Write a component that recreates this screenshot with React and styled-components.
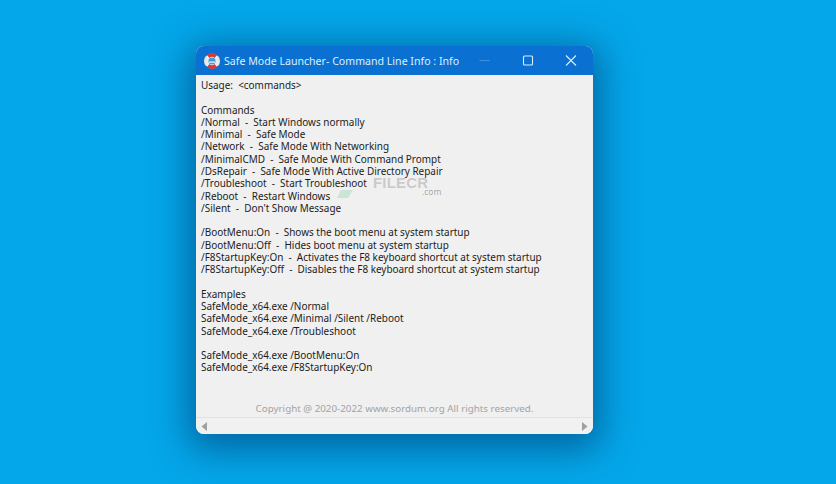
import React from "react";
import styled, { createGlobalStyle } from "styled-components";

const Global = createGlobalStyle`
  html, body { margin: 0; padding: 0; width: 836px; height: 484px; overflow: hidden; }
  body { background: #04a7ea; font-family: "Noto Sans", "Open Sans", sans-serif; }
`;

const Desktop = styled.div`
  width: 836px;
  height: 484px;
  box-sizing: border-box;
  padding: 46px 243px 50px 196px;
  background: #04a7ea;
`;

const Window = styled.div`
  height: 388px;
  display: flex;
  flex-direction: column;
  border-radius: 8px;
  overflow: hidden;
  background: #f0f0f0;
  box-shadow: 0 8px 36px 8px rgba(0, 40, 90, 0.5);
`;

const TitleBar = styled.div`
  height: 29px;
  flex: none;
  display: flex;
  align-items: center;
  background: #0a70d2;
  color: #dcf0fc;
  padding-left: 8px;
`;

const IconSvg = styled.svg`
  flex: none;
`;

const Title = styled.div`
  flex: 1;
  min-width: 0;
  margin-left: 4px;
  font-size: 10.6px;
  white-space: pre;
`;

const Controls = styled.div`
  flex: none;
  display: flex;
  align-items: center;
  padding-right: 1px;
`;

const ControlButton = styled.div`
  width: 43px;
  height: 29px;
  display: flex;
  align-items: center;
  justify-content: center;
`;

const Body = styled.div`
  position: relative;
  flex: 1;
  display: flex;
  flex-direction: column;
  min-height: 0;
`;

const TextArea = styled.pre`
  flex: 1;
  margin: 0;
  padding: 4px 0 0 5px;
  font-family: "Noto Sans", "Open Sans", sans-serif;
  font-size: 9.95px;
  line-height: 12.28px;
  color: #1c1c1c;
  white-space: pre;
`;

const Copyright = styled.div`
  text-align: center;
  font-size: 9.8px;
  line-height: 13px;
  color: #a3a3a3;
  padding-bottom: 2px;
`;

const ScrollBar = styled.div`
  height: 16px;
  flex: none;
  display: flex;
  align-items: center;
  justify-content: space-between;
  padding: 0 5px;
  border-top: 1px solid #e2e2e2;
  background: #f1f1f1;
`;

const Watermark = styled.div`
  position: absolute;
  left: 140px;
  top: 100px;
  width: 110px;
  height: 24px;
  pointer-events: none;
`;

const MarkWord = styled.div`
  position: absolute;
  left: 37px;
  top: 0;
  font-family: "Liberation Sans", sans-serif;
  font-weight: 700;
  font-size: 15px;
  line-height: 16px;
  letter-spacing: 0.2px;
  color: rgba(120, 120, 120, 0.32);
`;

const MarkDomain = styled.div`
  position: absolute;
  left: 86px;
  top: 12px;
  font-size: 8.5px;
  line-height: 10px;
  color: rgba(110, 120, 125, 0.6);
`;

const MarkLeaf = styled.svg`
  position: absolute;
  left: 1px;
  top: 14px;
`;

const Lifebuoy = () => (
  <IconSvg width="16" height="16" viewBox="0 0 16 16">
    <circle cx="8" cy="8" r="7.4" fill="#f4f4f4" />
    <path d="M3 1.9A7.6 7.6 0 0 1 13 1.9L10.6 4.9A3.8 3.800 0 0 0 5.400 4.900Z" fill="#d8383a" />
    <path d="M3 14.100A7.6 7.6 0 0 0 13 14.100L10.600 11.100A3.800 3.800 0 0 1 5.400 11.100Z" fill="#d8383a" />
    <path d="M1.900 3A7.6 7.6 0 0 0 1.900 13L4.700 10.600A3.800 3.800 0 0 1 4.700 5.400Z" fill="#e8e8e8" />
    <path d="M14.100 3A7.6 7.6 0 0 1 14.100 13L11.300 10.600A3.800 3.800 0 0 0 11.300 5.400Z" fill="#e8e8e8" />
    <circle cx="8" cy="8" r="3.600" fill="#3f9ad8" />
    <path d="M5 8.500h6v1.200H5z" fill="#e8f4fb" />
  </IconSvg>
);

const content = `Usage:  <commands>

Commands
/Normal  -  Start Windows normally
/Minimal  -  Safe Mode
/Network  -  Safe Mode With Networking
/MinimalCMD  -  Safe Mode With Command Prompt
/DsRepair  -  Safe Mode With Active Directory Repair
/Troubleshoot  -  Start Troubleshoot
/Reboot  -  Restart Windows
/Silent  -  Don't Show Message

/BootMenu:On  -  Shows the boot menu at system startup
/BootMenu:Off  -  Hides boot menu at system startup
/F8StartupKey:On  -  Activates the F8 keyboard shortcut at system startup
/F8StartupKey:Off  -  Disables the F8 keyboard shortcut at system startup

Examples
SafeMode_x64.exe /Normal
SafeMode_x64.exe /Minimal /Silent /Reboot
SafeMode_x64.exe /Troubleshoot

SafeMode_x64.exe /BootMenu:On
SafeMode_x64.exe /F8StartupKey:On`;

export default function App() {
  return (
    <>
      <Global />
      <Desktop>
        <Window>
          <TitleBar>
            <Lifebuoy />
            <Title>Safe Mode Launcher- Command Line Info : Info</Title>
            <Controls>
              <ControlButton>
                <svg width="12" height="12" viewBox="0 0 12 12">
                  <path d="M0.500 5.500h10.500" stroke="#3f8fdc" strokeWidth="1" />
                </svg>
              </ControlButton>
              <ControlButton>
                <svg width="12" height="12" viewBox="0 0 12 12">
                  <rect x="1.500" y="1" width="9" height="9" rx="1" fill="none" stroke="#d9eefc" strokeWidth="1.100" />
                </svg>
              </ControlButton>
              <ControlButton>
                <svg width="12" height="12" viewBox="0 0 12 12">
                  <path d="M1 0.500l10 10M11 0.500L1 10.500" stroke="#d9eefc" strokeWidth="1.100" />
                </svg>
              </ControlButton>
            </Controls>
          </TitleBar>
          <Body>
            <TextArea>{content}</TextArea>
            <Copyright>Copyright @ 2020-2022 www.sordum.org All rights reserved.</Copyright>
            <ScrollBar>
              <svg width="7" height="9" viewBox="0 0 7 9"><path d="M6 0v9L0.500 4.500Z" fill="#a0a0a0" /></svg>
              <svg width="7" height="9" viewBox="0 0 7 9"><path d="M1 0v9l5.500-4.500Z" fill="#a0a0a0" /></svg>
            </ScrollBar>
            <Watermark>
              <MarkLeaf width="16" height="9" viewBox="0 0 16 9">
                <path d="M0 9L4 1h12L11 9Z" fill="rgba(70,190,130,0.22)" />
              </MarkLeaf>
              <MarkWord>FILECR</MarkWord>
              <MarkDomain>.com</MarkDomain>
            </Watermark>
          </Body>
        </Window>
      </Desktop>
    </>
  );
}
